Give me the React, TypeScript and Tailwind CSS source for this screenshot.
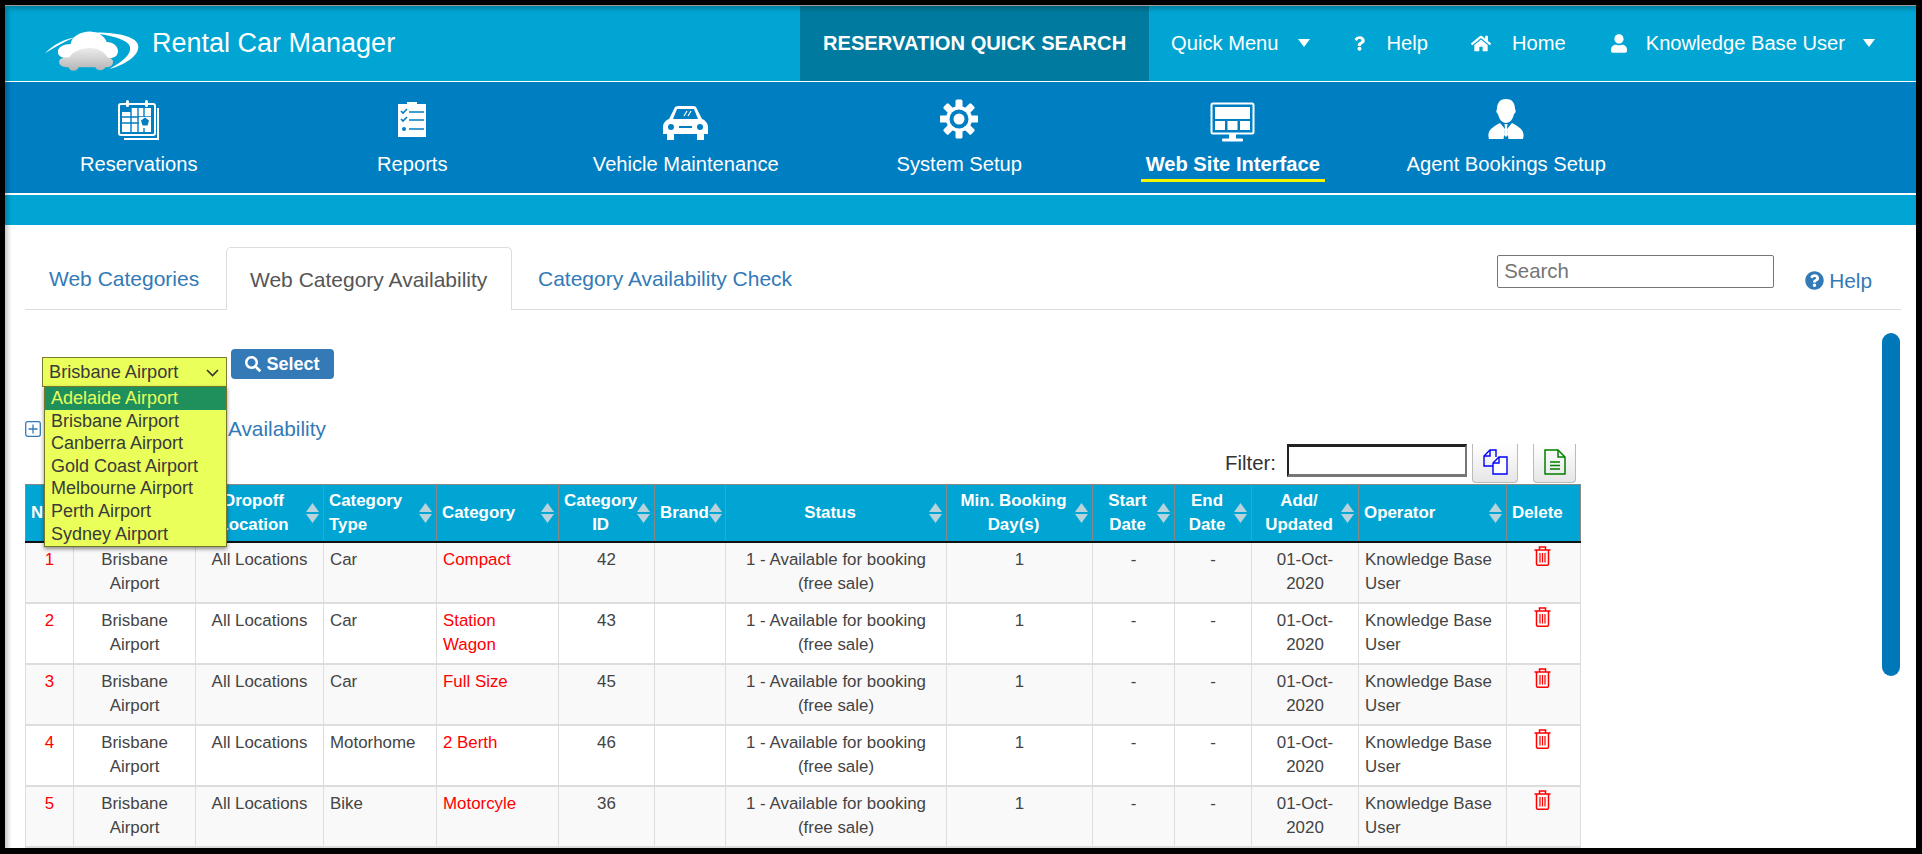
import { FaHome, FaQuestion, FaQuestionCircle, FaSearch, FaUser } from "react-icons/fa";

const airports = [
  "Adelaide Airport",
  "Brisbane Airport",
  "Canberra Airport",
  "Gold Coast Airport",
  "Melbourne Airport",
  "Perth Airport",
  "Sydney Airport",
];

const rows = [
  { no: 1, type: "Car", category: "Compact", id: 42 },
  { no: 2, type: "Car", category: "Station Wagon", id: 43 },
  { no: 3, type: "Car", category: "Full Size", id: 45 },
  { no: 4, type: "Motorhome", category: "2 Berth", id: 46 },
  { no: 5, type: "Bike", category: "Motorcyle", id: 36 },
  { no: 6, type: "Car", category: "Compact", id: 42 },
];

const columns = [
  { label: "No", width: "w-[48px]", align: "left" },
  { label: "Pickup Location", width: "w-[122px]", align: "center" },
  { label: "Dropoff Location", width: "w-[128px]", align: "center" },
  { label: "Category Type", width: "w-[113px]", align: "left" },
  { label: "Category", width: "w-[122px]", align: "left" },
  { label: "Category ID", width: "w-[96px]", align: "center" },
  { label: "Brand", width: "w-[71px]", align: "left" },
  { label: "Status", width: "w-[221px]", align: "center" },
  { label: "Min. Booking Day(s)", width: "w-[146px]", align: "center" },
  { label: "Start Date", width: "w-[82px]", align: "center" },
  { label: "End Date", width: "w-[77px]", align: "center" },
  { label: "Add/ Updated", width: "w-[107px]", align: "center" },
  { label: "Operator", width: "w-[148px]", align: "left" },
  { label: "Delete", width: "w-[74px]", align: "none" },
];

function Logo() {
  return (
    <svg width="118" height="50" viewBox="0 0 354 150" className="shrink-0 self-start mt-6">
      <defs>
        <linearGradient id="carFill" x1="0" y1="0" x2="0" y2="1">
          <stop offset="0" stopColor="#ececec" />
          <stop offset="1" stopColor="#b4b4b4" />
        </linearGradient>
      </defs>
      <path d="M45 70 C70 45 100 28 135 22 C105 34 78 50 45 70Z" fill="#fff" />
      <path d="M180 8 C260 5 325 20 325 50 C325 80 280 105 238 117 C275 95 305 75 300 50 C295 28 240 14 180 8Z" fill="#fff" />
      <path d="M85 72 C78 50 105 42 122 42 C125 18 155 3 185 5 C210 7 226 22 230 36 C250 36 266 50 264 66 C262 80 250 84 240 84 L110 84 C98 84 88 80 85 72Z" fill="#fff" />
      <path d="M88 100 C84 86 100 82 118 82 C128 66 150 54 180 54 C208 54 224 68 232 82 C245 84 252 92 248 102 C244 110 236 112 226 112 C222 124 200 124 196 112 L146 112 C142 126 118 126 116 112 C102 112 92 110 88 100Z" fill="url(#carFill)" />
    </svg>
  );
}

function Caret({ className }: { className: string }) {
  return (
    <svg width="12" height="8" viewBox="0 0 12 8" className={className}>
      <path d="M0 0H12L6 8Z" fill="#fff" />
    </svg>
  );
}

function CalendarIcon() {
  return (
    <svg width="44" height="44" viewBox="0 0 44 44" fill="none">
      <path d="M41 9V40H7" stroke="#fff" strokeWidth="2" />
      <rect x="2" y="5" width="36" height="31" rx="2" stroke="#fff" strokeWidth="2" />
      <rect x="9" y="1" width="3" height="7" rx="1.5" fill="#fff" />
      <rect x="28" y="1" width="3" height="7" rx="1.5" fill="#fff" />
      <path d="M5 13H14V9H34V33H5Z" fill="#fff" />
      <path d="M5 18H34M5 24H34M14 9V33M21 9V33M27 9V33" stroke="#007ec2" strokeWidth="1.4" />
      <rect x="22" y="18" width="12" height="11" fill="#fff" />
      <path d="M28 18.5L32 21.5L30.5 26.5H25.5L24 21.5Z" fill="#007ec2" />
    </svg>
  );
}

function ClipboardIcon() {
  return (
    <svg width="30" height="44" viewBox="0 0 30 44">
      <path d="M1 5H10V3H20V5H29V38H1Z" fill="#fff" />
      <path d="M4 12L6 14L10 10M4 20L6 22L10 18" stroke="#007ec2" strokeWidth="1.6" fill="none" />
      <path d="M12 13H27M12 21H27M12 30H27" stroke="#007ec2" strokeWidth="1.6" />
      <circle cx="7" cy="30" r="2" fill="#007ec2" />
    </svg>
  );
}

function CarIcon() {
  return (
    <svg width="45" height="44" viewBox="0 0 45 44">
      <path d="M12 8C13 7 15 7 16 7H29C31 7 32 7 33 8L39 20C42 21 45 24 45 28V35H41V41H34V35H11V41H4V35H0V28C0 24 3 21 6 20Z" fill="#fff" />
      <path d="M14 10H31L35 20H10Z" fill="#007ec2" />
      <path d="M21 17L24 12M25 17L28 12" stroke="#fff" strokeWidth="1.2" />
      <circle cx="8" cy="28" r="3" fill="#007ec2" />
      <circle cx="37" cy="28" r="3" fill="#007ec2" />
      <rect x="16" y="27" width="13" height="2" fill="#007ec2" />
    </svg>
  );
}

function GearIcon() {
  return (
    <svg width="38" height="44" viewBox="0 0 38 44" fill="none">
      {[0, 45, 90, 135].map((a) => (
        <rect key={a} x="15.5" y="0.5" width="7" height="39" rx="1.5" fill="#fff" transform={`rotate(${a} 19 20)`} />
      ))}
      <circle cx="19" cy="20" r="13" fill="#fff" />
      <circle cx="19" cy="20" r="9.5" fill="#007ec2" />
      <circle cx="19" cy="20" r="5.5" fill="#fff" />
    </svg>
  );
}

function MonitorIcon() {
  return (
    <svg width="46" height="44" viewBox="0 0 46 44" fill="none">
      <rect x="1.5" y="4.5" width="42" height="30" rx="1.5" stroke="#fff" strokeWidth="2" />
      <rect x="5" y="8" width="35" height="12" fill="#fff" />
      <rect x="5" y="22" width="10" height="9" fill="#fff" />
      <rect x="17.5" y="22" width="10" height="9" fill="#fff" />
      <rect x="30" y="22" width="10" height="9" fill="#fff" />
      <rect x="19" y="35" width="7" height="5" fill="#fff" />
      <rect x="12" y="39.5" width="21" height="3" rx="1" fill="#fff" />
    </svg>
  );
}

function AgentIcon() {
  return (
    <svg width="36" height="44" viewBox="0 0 36 44">
      <path d="M18 0C25 0 27 5 27 10C28 11 28 14 26 15C25 20 22 24 18 24C14 24 11 20 10 15C8 14 8 11 9 10C9 5 11 0 18 0Z" fill="#fff" />
      <path d="M12 24L17 30L15.5 40H1C-1 33 2 29 12 24ZM24 24L19 30L20.5 40H35C37 33 34 29 24 24Z" fill="#fff" />
      <path d="M16.5 25H19.5L19 29L20 36L18 38L16 36L17 29Z" fill="#fff" />
    </svg>
  );
}

function SortArrows() {
  return (
    <svg width="13" height="20" viewBox="0 0 13 20" className="shrink-0">
      <path d="M6.5 0L13 9H0Z" fill="#b9d3dc" />
      <path d="M0 11H13L6.5 20Z" fill="#b9d3dc" />
    </svg>
  );
}

function TrashIcon() {
  return (
    <svg width="17" height="20" viewBox="0 0 17 20" fill="none" stroke="#ff0000" strokeWidth="1.5">
      <path d="M0.5 4H16.5M5.5 4V1H11.5V4" />
      <path d="M2.5 4V18C2.5 18.8 3.2 19.3 4 19.3H13C13.8 19.3 14.5 18.8 14.5 18V4" />
      <path d="M6 7V16.5M8.5 7V16.5M11 7V16.5" strokeWidth="1.2" />
    </svg>
  );
}

function CopyIcon() {
  return (
    <svg width="25" height="26" viewBox="0 0 25 26" fill="none" stroke="#0000ff" strokeWidth="1.4">
      <path d="M10 17H1V7L7 1H13V8" />
      <path d="M7 1V7H1" />
      <path d="M10 25V14L16 8H24V25Z" fill="#fff" />
      <path d="M16 8V14H10" />
    </svg>
  );
}

function FileIcon() {
  return (
    <svg width="22" height="26" viewBox="0 0 22 26" fill="none" stroke="#008000" strokeWidth="1.5">
      <path d="M1 1H14L21 8V25H1Z" />
      <path d="M14 1V8H21" />
      <path d="M6 13H16M6 16.5H16M6 20H16" strokeWidth="1.6" />
    </svg>
  );
}

const navItems = [
  { label: "Reservations", icon: <CalendarIcon /> },
  { label: "Reports", icon: <ClipboardIcon /> },
  { label: "Vehicle Maintenance", icon: <CarIcon /> },
  { label: "System Setup", icon: <GearIcon /> },
  { label: "Web Site Interface", icon: <MonitorIcon />, active: true },
  { label: "Agent Bookings Setup", icon: <AgentIcon /> },
];

export default function App() {
  return (
    <div className="h-[854px] w-[1922px] overflow-hidden bg-black pt-[5px] pb-[6px] pl-[5px] pr-[6px] font-['Liberation_Sans',Arial,sans-serif] text-[#333]">
      <div className="relative h-full overflow-hidden bg-white border-t border-[#999]">
        {/* top bar */}
        <header className="flex h-[75px] items-center bg-[#00a5d3] pr-[41px] pl-[25px] text-white">
          <Logo />
          <span className="ml-1 text-[27px]">Rental Car Manager</span>
          <div className="ml-auto flex h-full w-[349px] items-center justify-center bg-[#007a9e] text-[20.15px] font-bold">
            RESERVATION QUICK SEARCH
          </div>
          <div className="flex items-center text-[20.15px]">
            <span className="ml-[22px]">Quick Menu</span>
            <Caret className="ml-[19px]" />
            <FaQuestion className="ml-[44px] h-[15px] w-[11px]" />
            <span className="ml-[22px]">Help</span>
            <FaHome className="ml-[43px] h-[19px] w-[20px]" />
            <span className="ml-[21px]">Home</span>
            <FaUser className="ml-[45px] h-[19px] w-[16px]" />
            <span className="ml-[19px]">Knowledge Base User</span>
            <Caret className="ml-[18px]" />
          </div>
        </header>

        {/* main nav */}
        <nav className="flex h-[113px] border-y border-white bg-[#007ec2] text-white">
          <div className="-ml-[3px] flex">
            {navItems.map((item) => (
              <div key={item.label} className="flex w-[273.5px] flex-col items-center pt-[17px]">
                <div className="flex h-[44px] justify-center">{item.icon}</div>
                <span
                  className={
                    item.active
                      ? "mt-[9px] w-[184px] border-b-[3px] border-[#f5f500] pb-[3px] text-center text-[20.15px] leading-[24px] font-bold"
                      : "mt-[9px] text-[20.15px] leading-[24px]"
                  }
                >
                  {item.label}
                </span>
              </div>
            ))}
          </div>
        </nav>
        <div className="h-[31px] border-t border-white bg-[#00a5d3]" />

        <main className="pr-[15px] pl-[20px]">
          {/* tabs */}
          <div className="mt-[22px] flex h-[63px] items-stretch border-b border-[#ddd] text-[21px]">
            <a className="flex w-[201px] items-center pt-[2px] pl-[24px] text-[#337ab7]">Web Categories</a>
            <a className="-mb-px flex w-[286px] items-center rounded-t-[5px] border border-b-0 border-[#ddd] bg-white pt-[2px] pl-[23px] text-[#555]">
              Web Category Availability
            </a>
            <a className="flex items-center pt-[2px] pl-[26px] text-[#337ab7]">Category Availability Check</a>
            <div className="ml-auto flex items-start pt-[8px]">
              <input
                readOnly
                placeholder="Search"
                className="h-[33px] w-[277px] rounded-[2px] border border-[#767676] px-[6px] text-[20.4px] placeholder:text-[#757575]"
              />
              <a className="mt-[10px] ml-[31px] flex items-center pr-[29px] text-[20.8px] text-[#337ab7]">
                <FaQuestionCircle className="mr-[5px] h-[19px] w-[19px]" />
                Help
              </a>
            </div>
          </div>

          {/* location select */}
          <div className="relative mt-[39px] flex h-[68px] items-start">
            <div className="mt-[8px] ml-[17px] flex h-[30px] w-[185px] items-center justify-between border border-[#7c7c30] bg-[#eaff5a] pt-px pr-[7px] pl-[6px] text-[18.2px] text-[#3a3a3a]">
              Brisbane Airport
              <svg width="13" height="8" viewBox="0 0 13 8" fill="none" stroke="#333" strokeWidth="1.6">
                <path d="M1 1L6.5 6.5L12 1" />
              </svg>
            </div>
            <button className="ml-[4px] flex h-[30px] w-[103px] items-center justify-center gap-[5px] rounded-[4px] bg-[#337ab7] text-[18px] font-bold text-white">
              <FaSearch className="h-[16px] w-[16px]" />
              Select
            </button>
            <ul className="absolute top-[37px] left-[19px] z-10 w-[183px] border border-[#77772c] bg-[#eaff5a] pb-px text-[18px] leading-[22.6px] text-[#3a3a3a] shadow-[0_2px_4px_rgba(0,0,0,0.45)]">
              {airports.map((a, i) => (
                <li key={a} className={i === 0 ? "bg-[#1f8f5c] pl-[6px] text-[#eaff5a]" : "pl-[6px]"}>
                  {a}
                </li>
              ))}
            </ul>
          </div>

          {/* add link */}
          <div className="mb-[4px] flex h-[23px] items-center text-[20.8px] text-[#337ab7]">
            <svg width="16" height="16" viewBox="0 0 16 16" fill="none" stroke="#337ab7" strokeWidth="1.3" className="shrink-0">
              <rect x="0.7" y="0.7" width="14.6" height="14.6" rx="2" />
              <path d="M8 3.5V12.5M3.5 8H12.5" />
            </svg>
            <span className="ml-[7px]">Add Web Category Availability</span>
          </div>

          {/* filter */}
          <div className="flex h-[40px] w-[1556px] items-start justify-end pr-[5px]">
            <span className="mt-[4px] mr-[11px] text-[20.4px]">Filter:</span>
            <input
              readOnly
              className="h-[33px] w-[180px] border-x-2 border-t-[3px] border-b-[3px] border-t-[#222] border-r-[#767676] border-b-[#767676] border-l-[#222]"
            />
            <button className="ml-[5px] flex h-[39px] w-[46px] items-center justify-center rounded-b-[4px] border border-t-0 border-[#bbb] bg-gradient-to-b from-white to-[#e6e6e6] pb-[3px]">
              <CopyIcon />
            </button>
            <button className="ml-[15px] flex h-[39px] w-[43px] items-center justify-center rounded-b-[4px] border border-t-0 border-[#bbb] bg-gradient-to-b from-white to-[#e6e6e6] pb-[3px]">
              <FileIcon />
            </button>
          </div>

          {/* table */}
          <table className="w-[1555px] table-fixed border-collapse text-[16.9px] leading-[24px] text-[#444]">
            <colgroup>
              {columns.map((c) => (
                <col key={c.label} className={c.width} />
              ))}
            </colgroup>
            <thead>
              <tr className="h-[57px] border-t border-b-2 border-t-[#888] border-b-[#111] bg-[#00a5d3] text-white">
                {columns.map((c) => (
                  <th key={c.label} className="border-r border-l border-[#888] pr-[4px] pl-[5px] font-bold">
                    <div className="flex items-center">
                      <span className={c.align === "center" ? "flex-1 text-center" : "flex-1 text-left"}>{c.label}</span>
                      {c.align !== "none" && <SortArrows />}
                    </div>
                  </th>
                ))}
              </tr>
            </thead>
            <tbody>
              {rows.map((r) => (
                <tr key={r.no} className="h-[61px] border-b-2 border-[#ddd] align-top odd:bg-[#f9f9f9] even:bg-white">
                  <td className="border border-[#ddd] pt-[5px] text-center text-[#ff0000]">{r.no}</td>
                  <td className="border border-[#ddd] px-[7px] pt-[5px] text-center">Brisbane Airport</td>
                  <td className="border border-[#ddd] pt-[5px] text-center">All Locations</td>
                  <td className="border border-[#ddd] px-[6px] pt-[5px]">{r.type}</td>
                  <td className="border border-[#ddd] px-[6px] pt-[5px] text-[#ff0000]">
                    {r.category === "Station Wagon" ? (
                      <>
                        Station
                        <br />
                        Wagon
                      </>
                    ) : (
                      r.category
                    )}
                  </td>
                  <td className="border border-[#ddd] pt-[5px] text-center">{r.id}</td>
                  <td className="border border-[#ddd]" />
                  <td className="border border-[#ddd] px-[7px] pt-[5px] text-center">1 - Available for booking (free sale)</td>
                  <td className="border border-[#ddd] pt-[5px] text-center">1</td>
                  <td className="border border-[#ddd] pt-[5px] text-center">-</td>
                  <td className="border border-[#ddd] pt-[5px] text-center">-</td>
                  <td className="border border-[#ddd] px-[7px] pt-[5px] text-center">01-Oct-2020</td>
                  <td className="border border-[#ddd] px-[6px] pt-[5px]">Knowledge Base User</td>
                  <td className="border border-[#ddd] pt-[3px] pr-[2px]">
                    <div className="flex justify-center">
                      <TrashIcon />
                    </div>
                  </td>
                </tr>
              ))}
            </tbody>
          </table>
        </main>

        {/* scrollbar thumb */}
        <div className="absolute top-[327px] right-[16px] h-[343px] w-[18px] rounded-t-[9px] rounded-b-[9px] bg-[#0077b8]" />
        <div className="pointer-events-none absolute inset-0 shadow-[inset_3px_3px_4px_rgba(0,0,0,0.22)]" />
      </div>
    </div>
  );
}
